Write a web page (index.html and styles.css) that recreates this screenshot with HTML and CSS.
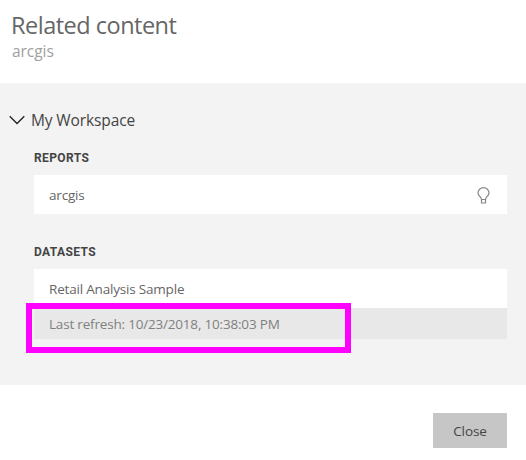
FILE: index.html
```html
<!DOCTYPE html>
<html lang="en">
<head>
<meta charset="utf-8">
<title>Related content</title>
<link rel="stylesheet" href="styles.css">
</head>
<body>
<main class="dialog">
  <header class="header">
    <h1 class="title"><span>Related content</span></h1>
    <p class="subtitle"><span>arcgis</span></p>
  </header>
  <section class="panel">
    <div class="workspace">
      <svg class="chevron" width="16" height="10" viewBox="0 0 16 10"><path d="M.7 1.2 8 8.5l7.3-7.3"/></svg>
      <span class="workspace-name">My Workspace</span>
    </div>
    <h2 class="label"><span>REPORTS</span></h2>
    <div class="row">
      <span class="report-name">arcgis</span>
      <svg class="bulb" width="13" height="17" viewBox="0 0 13 17"><path d="M4.500 12.500C4.500 9.700 1 9 1 5.900a5.500 5.200 0 0 1 11 0C12 9 8.500 9.700 8.500 12.500v3.500h-4zM4.500 12.500h4"/></svg>
    </div>
    <h2 class="label label-datasets"><span>DATASETS</span></h2>
    <div class="row"><span class="dataset-name">Retail Analysis Sample</span></div>
    <div class="refresh">
      <span class="refresh-text">Last refresh: 10/23/2018, 10:38:03 PM</span>
      <div class="highlight"></div>
    </div>
  </section>
  <footer class="footer"><button class="close"><span>Close</span></button></footer>
</main>
</body>
</html>
```
FILE: styles.css
```css
* { box-sizing: border-box; }
body { margin: 0; background: #fff; color: #666; font-family: "Open Sans", sans-serif; font-size: 13.5px; letter-spacing: -.19px; }
h1, h2, p { margin: 0; font-weight: 400; }
.dialog { width: 526px; height: 460px; }
.header { height: 83px; padding: 8px 12px 0 11px; }
.title { font-size: 23.5px; line-height: 34px; letter-spacing: -.5px; color: #666; }
.subtitle { padding-left: 1px; font-size: 15.5px; line-height: 18px; letter-spacing: -.05px; color: #a0a0a0; }
.panel { height: 302px; padding: 26px 19px 0 34px; background: #f3f3f3; }
.workspace { display: flex; align-items: center; height: 22px; margin-left: -25px; gap: 6px; color: #444; font-size: 15.5px; letter-spacing: -.12px; }
.chevron { fill: none; stroke: #222; stroke-width: 1.3; }
.label { height: 44px; padding-top: 18px; font: 700 12px/18px Roboto, sans-serif; letter-spacing: .4px; color: #444; }
.label-datasets { height: 55px; padding-top: 29px; }
.row { display: flex; align-items: center; justify-content: space-between; height: 39px; padding: 1px 17px 0 15px; background: #fff; }
.bulb { fill: none; stroke: #858585; stroke-width: 1.2; }
.refresh { position: relative; height: 31px; padding-left: 15px; line-height: 32px; background: #e8e8e8; color: #808080; }
.highlight { position: absolute; left: -8px; top: -5px; width: 325px; height: 50px; border: 6px solid #f0f; }
.footer { display: flex; justify-content: flex-end; padding: 28px 19px 0; }
.close { width: 74px; height: 35px; padding: 1px 0 0; border: 0; background: #c6c6c6; color: #444; font: 13.5px "Open Sans", sans-serif; letter-spacing: -.1px; }
```
